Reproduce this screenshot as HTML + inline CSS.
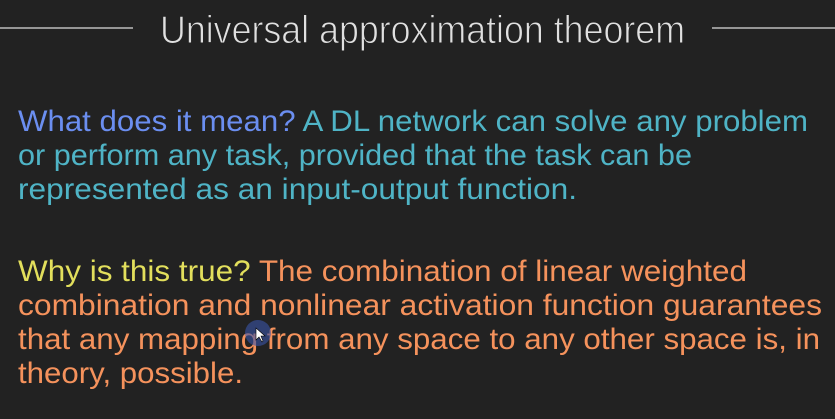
<!DOCTYPE html>
<html><head><meta charset="utf-8"><style>
html,body{margin:0;padding:0;background:#222222;width:835px;height:419px;overflow:hidden}
svg{display:block}
text{font-family:"Liberation Sans",sans-serif}
</style></head><body>
<svg width="835" height="419" viewBox="0 0 835 419" xmlns="http://www.w3.org/2000/svg">
<rect width="835" height="419" fill="#222222"/>
<line x1="0" y1="28" x2="133" y2="28" stroke="#bdbdbd" stroke-width="1.5"/>
<line x1="712" y1="28" x2="835" y2="28" stroke="#bdbdbd" stroke-width="1.5"/>
<text x="160" y="43" font-size="39" fill="#e0e0e0" textLength="525" lengthAdjust="spacingAndGlyphs" stroke="#222" stroke-width="1">Universal approximation theorem</text>
<g font-size="29.5">
<text x="18" y="131" textLength="790" lengthAdjust="spacingAndGlyphs"><tspan fill="#6b8ef0">What does it mean?</tspan><tspan fill="#4fb4c6"> A DL network can solve any problem</tspan></text>
<text x="18" y="165" fill="#4fb4c6" textLength="674" lengthAdjust="spacingAndGlyphs">or perform any task, provided that the task can be</text>
<text x="18" y="199" fill="#4fb4c6" textLength="559" lengthAdjust="spacingAndGlyphs">represented as an input-output function.</text>
<text x="18" y="281" textLength="729" lengthAdjust="spacingAndGlyphs"><tspan fill="#e2df5c">Why is this true?</tspan><tspan fill="#f5925c"> The combination of linear weighted</tspan></text>
<text x="18" y="315" fill="#f5925c" textLength="804" lengthAdjust="spacingAndGlyphs">combination and nonlinear activation function guarantees</text>
<text x="18" y="349" fill="#f5925c" textLength="802" lengthAdjust="spacingAndGlyphs">that any mapping from any space to any other space is, in</text>
<text x="18" y="383" fill="#f5925c" textLength="225" lengthAdjust="spacingAndGlyphs">theory, possible.</text>
</g>
<circle cx="258" cy="333" r="13" fill="#3a55a8" opacity="0.6"/>
<path d="M256 328 L256 340 L259 337 L262 342 L263 341 L261 336 L265 336 Z" fill="#fff" stroke="#000" stroke-width="0.6"/>
</svg>
</body></html>
